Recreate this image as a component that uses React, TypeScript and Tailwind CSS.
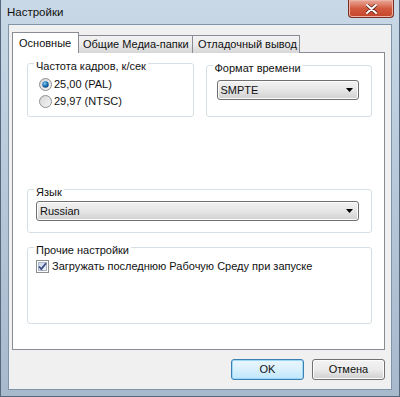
import React from "react";

const Radio = ({ checked }: { checked?: boolean }) => (
  <svg width="13" height="13" viewBox="0 0 13 13">
    <defs>
      <linearGradient id={checked ? "rb1" : "rb0"} x1="0" y1="0" x2="1" y2="1">
        <stop offset="0" stopColor="#d4d4d4" />
        <stop offset="1" stopColor="#f7f7f7" />
      </linearGradient>
      <radialGradient id="rdot" cx="0.4" cy="0.35" r="0.7">
        <stop offset="0" stopColor="#8fd3f3" />
        <stop offset="0.5" stopColor="#1f78bb" />
        <stop offset="1" stopColor="#0d3f70" />
      </radialGradient>
    </defs>
    <circle cx="6.5" cy="6.5" r="6" fill={`url(#${checked ? "rb1" : "rb0"})`} stroke="#8e8f8f" />
    {checked ? <circle cx="6.5" cy="6.5" r="3.2" fill="url(#rdot)" /> : null}
  </svg>
);

const CheckBox = () => (
  <svg width="13" height="13" viewBox="0 0 13 13">
    <defs>
      <linearGradient id="cb" x1="0" y1="0" x2="1" y2="1">
        <stop offset="0" stopColor="#c7d4e8" />
        <stop offset="1" stopColor="#f4f7fb" />
      </linearGradient>
    </defs>
    <rect x="0.5" y="0.5" width="12" height="12" fill="#fdfdfd" stroke="#8e8f8f" />
    <rect x="2.5" y="2.5" width="8" height="8" fill="url(#cb)" stroke="#aab6c8" />
    <path d="M3 6.5 L5.3 9 L10 3.2" fill="none" stroke="#3b4f86" strokeWidth="1.8" />
  </svg>
);

const Combo = ({ value, w }: { value: string; w: string }) => (
  <div
    className={`${w} h-[20px] flex items-center justify-between pl-[3px] pr-[5px] border border-[#707070] rounded-[3px] bg-gradient-to-b from-[#f2f2f2] via-[#e6e6e6] to-[#d0d0d0] shadow-[inset_0_0_0_1px_#fcfcfc]`}
  >
    <span className="leading-[15px]">{value}</span>
    <svg width="7" height="4" viewBox="0 0 7 4">
      <path d="M0 0 H7 L3.5 4 Z" fill="#000" />
    </svg>
  </div>
);

const Group = ({
  title,
  cls,
  children,
}: {
  title: string;
  cls: string;
  children?: React.ReactNode;
}) => (
  <div className={`relative border border-[#d5dfe5] rounded-[3px] ${cls}`}>
    <span className="absolute left-[6px] -top-[5px] bg-white px-[2px] leading-[15px] whitespace-nowrap">
      {title}
    </span>
    {children}
  </div>
);

export default function App() {
  return (
    <div className="w-[400px] h-[397px] flex flex-col bg-gradient-to-b from-[#c9d8e6] via-[#b5c7d9] to-[#a7b9cc] border-x border-b border-[#55687d] text-[11px] text-[#111] font-['Liberation_Sans',Arial,sans-serif]">
      <div className="h-[24px] flex items-start justify-between">
        <span className="pl-[6px] pt-[5px] leading-[15px] text-[11.5px]">Настройки</span>
        <div className="mr-[5px] w-[46px] h-[18px] rounded-b-[4px] border border-t-0 border-[#7b2e22] bg-gradient-to-b from-[#e9a99b] via-[#d25a3f] to-[#c4452a] flex items-center justify-center shadow-[inset_0_0_0_1px_#eeb3a6]">
          <svg width="11" height="10" viewBox="0 0 11 10">
            <path
              d="M1 1 L10 9 M10 1 L1 9"
              stroke="#5a2016"
              strokeWidth="3.4"
              strokeLinecap="round"
            />
            <path d="M1 1 L10 9 M10 1 L1 9" stroke="#ffffff" strokeWidth="2" strokeLinecap="round" />
          </svg>
        </div>
      </div>

      <div className="mx-[7px] mb-[6px] flex-1 flex flex-col bg-[#f0f0f0] border border-[#8294a8] pt-[7px] pl-[3px] pr-[6px]">
        <div className="flex items-end h-[21px] relative z-10">
          <div className="w-[67px] h-[21px] bg-white border border-b-0 border-[#898c95] pl-[6px] pt-[3px] leading-[15px]">
            Основные
          </div>
          <div className="w-[114px] h-[18px] bg-gradient-to-b from-[#f2f2f2] via-[#ebebeb] to-[#d6d6d6] border border-l-0 border-b-0 border-[#898c95] pl-[4px] pt-[1px] leading-[15px] whitespace-nowrap">
            Общие Медиа-папки
          </div>
          <div className="w-[107px] h-[18px] bg-gradient-to-b from-[#f2f2f2] via-[#ebebeb] to-[#d6d6d6] border border-l-0 border-b-0 border-[#898c95] pl-[5px] pt-[1px] leading-[15px] whitespace-nowrap">
            Отладочный вывод
          </div>
        </div>

        <div className="h-[298px] -mt-px bg-white border border-[#898c95] pt-[10px] pl-[14px] pr-[12px] flex flex-col">
          <div className="flex items-start gap-[12px]">
            <Group title="Частота кадров, к/сек" cls="w-[167px] h-[54px] pt-[12px] pl-[11px]">
              <div className="h-[17px] flex items-center gap-[2px]">
                <Radio checked />
                <span className="leading-[15px]">25,00 (PAL)</span>
              </div>
              <div className="h-[17px] flex items-center gap-[2px]">
                <Radio />
                <span className="leading-[15px]">29,97 (NTSC)</span>
              </div>
            </Group>
            <Group title="Формат времени" cls="mt-[2px] w-[167px] h-[52px] pt-[14px] pl-[10px]">
              <Combo value="SMPTE" w="w-[142px]" />
            </Group>
          </div>

          <Group title="Язык" cls="mt-[72px] h-[44px] pt-[11px] pl-[8px]">
            <Combo value="Russian" w="w-[323px]" />
          </Group>

          <Group title="Прочие настройки" cls="mt-[14px] h-[77px] pt-[10px] pl-[8px]">
            <div className="h-[17px] flex items-center gap-[3px]">
              <CheckBox />
              <span className="leading-[15px]">Загружать последнюю Рабочую Среду при запуске</span>
            </div>
          </Group>
        </div>

        <div className="flex justify-end gap-[8px] mt-[9px] pr-[0px]">
          <div className="w-[73px] h-[21px] flex items-center justify-center rounded-[3px] border border-[#3c7fb1] bg-gradient-to-b from-[#eaf6fd] via-[#d9f0fc] to-[#bee6fd] shadow-[inset_0_0_0_1px_#9ed8f8] leading-[15px]">
            OK
          </div>
          <div className="w-[73px] h-[21px] flex items-center justify-center rounded-[3px] border border-[#707070] bg-gradient-to-b from-[#f2f2f2] via-[#ebebeb] to-[#cfcfcf] shadow-[inset_0_0_0_1px_#fcfcfc] leading-[15px]">
            Отмена
          </div>
        </div>
      </div>
    </div>
  );
}
